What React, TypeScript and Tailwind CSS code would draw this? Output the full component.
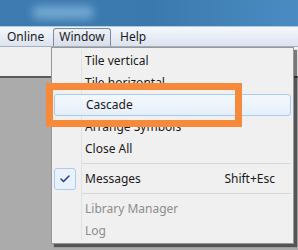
import { Check } from "lucide-react"

const font = { fontFamily: '"Noto Sans", "Noto Sans CJK SC", sans-serif' }

function Item({ label, hint, disabled }: { label: string; hint?: string; disabled?: boolean }) {
  return (
    <div className="flex h-[22px] items-center pl-[33px] pr-[18px]">
      <span className={disabled ? "text-[#8d8d8d]" : "text-[#1a1a1a]"}>{label}</span>
      {hint && <span className="ml-auto text-[#1a1a1a]">{hint}</span>}
    </div>
  )
}

function Separator() {
  return <div className="my-[3px] ml-[30px] mr-[2px] h-[2px] border-t border-[#d7d7d7] border-b-white" />
}

export default function App() {
  return (
    <div className="relative h-[250px] w-[298px] overflow-hidden bg-[#ababab] text-[12px]" style={font}>
      {/* title bar */}
      <div className="relative h-[27px] border-b border-[#a9cbe6] bg-gradient-to-r from-[#3d7bb0] via-[#3a79ad] to-[#4a8cc2]">
        <div className="absolute left-[32px] top-[6px] h-[13px] w-[62px] rounded-full bg-[#8bbde2] opacity-70 blur-[4px]" />
      </div>

      {/* menu bar */}
      <div className="flex h-[20px] items-center border-b border-[#a8b0bd] bg-gradient-to-b from-[#f5f8fc] to-[#dbe3f0] text-[#1a1a1a]">
        <span className="ml-[7px] w-[46px]">Online</span>
        <span className="flex h-[18px] w-[58px] items-center justify-center rounded-t-[3px] border border-b-0 border-[#7d8a9c] bg-gradient-to-b from-[#eef2f8] to-[#d7deea]">
          Window
        </span>
        <span className="ml-[9px]">Help</span>
      </div>

      {/* toolbar strip */}
      <div className="h-[31px] border-b-2 border-[#5a5a5a] bg-[#f0f0f0]" />

      {/* dropdown */}
      <div className="absolute left-[51px] top-[47px] w-[243px] border border-[#979797] bg-[#f0f0f0] pb-[1px] pt-[2px] shadow-[3px_3px_1px_rgba(0,0,0,0.5)]">
        <div className="absolute bottom-[2px] left-[29px] top-[2px] w-[2px] border-l border-[#e2e2e2] border-r-white" />
        <Item label="Tile vertical" />
        <Item label="Tile horizontal" />
        <div className="relative mx-[2px] flex h-[22px] items-center rounded-[3px] border border-[#a9cdf2] bg-gradient-to-b from-[#f4f8fd] to-[#e5eefa] pl-[31px]">
          <span className="text-[#1a1a1a]">Cascade</span>
        </div>
        <Item label="Arrange Symbols" />
        <Item label="Close All" />
        <Separator />
        <div className="relative flex h-[22px] items-center pl-[33px] pr-[18px]">
          <div className="absolute left-[2px] top-0 flex h-[22px] w-[22px] items-center justify-center rounded-[3px] border border-[#a9cdf2] bg-[#e9f1fc]">
            <Check className="h-[12px] w-[12px] text-[#1d3c9a]" strokeWidth={3} />
          </div>
          <span className="text-[#1a1a1a]">Messages</span>
          <span className="ml-auto text-[#1a1a1a]">Shift+Esc</span>
        </div>
        <Separator />
        <Item label="Library Manager" disabled />
        <Item label="Log" disabled />
      </div>

      {/* orange highlight frame */}
      <div className="absolute left-[46px] top-[83px] h-[44px] w-[196px] border-[7px] border-[#f7893a]" />
    </div>
  )
}
